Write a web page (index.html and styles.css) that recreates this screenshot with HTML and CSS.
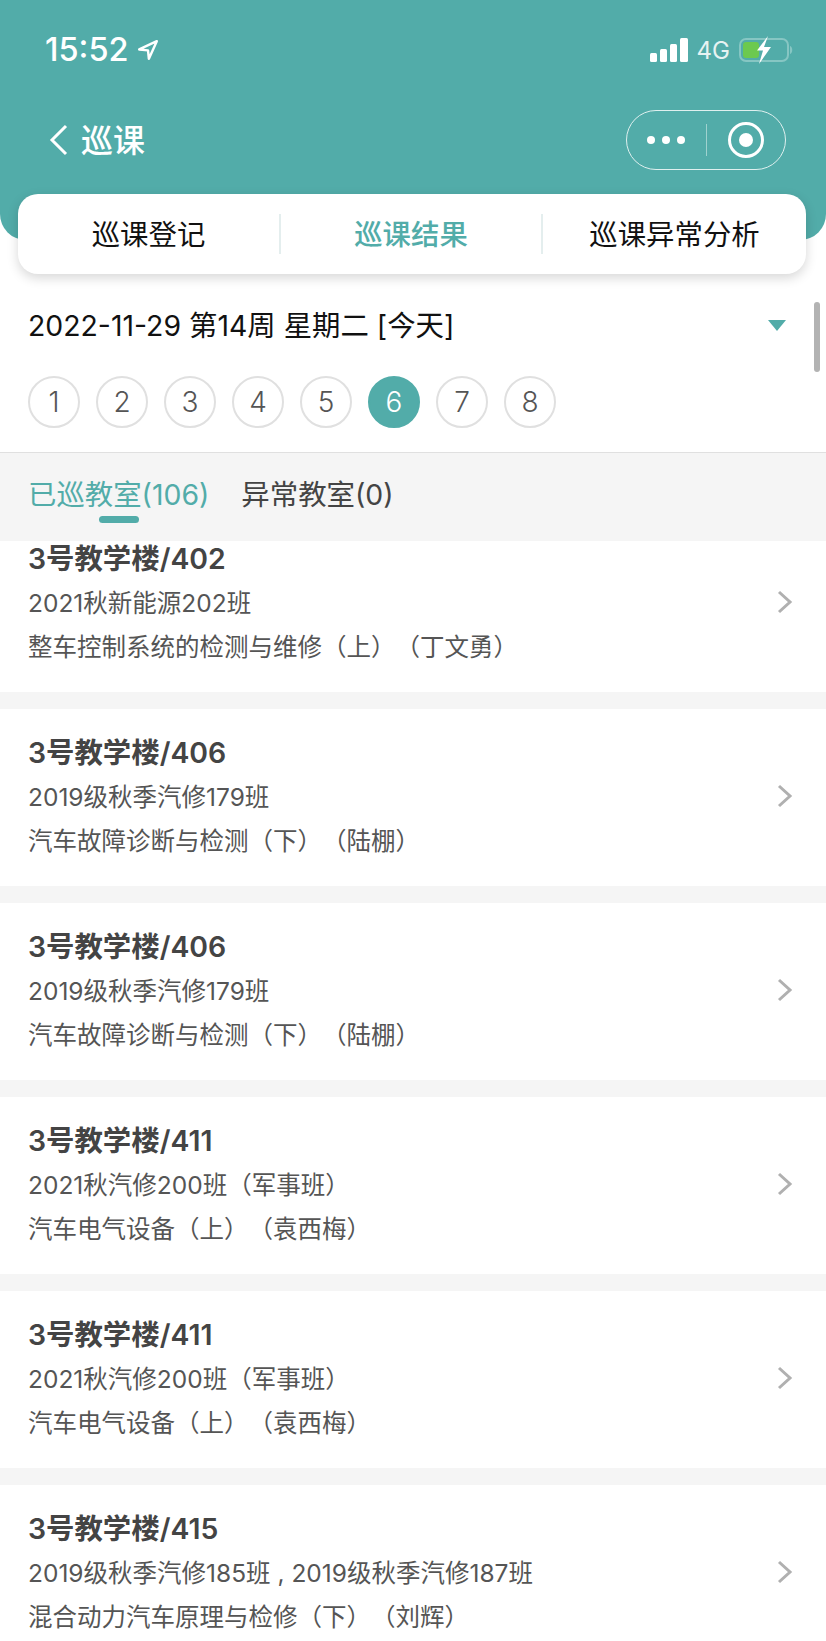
FILE: index.html
```html
<!DOCTYPE html>
<html lang="zh">
<head>
    <meta charset="UTF-8">
    <meta name="viewport" content="width=device-width, initial-scale=1.0">
    <title>巡课</title>
    <link rel="stylesheet" href="styles.css">
</head>
<body>
    <header class="top">
        <div class="status">
            <div class="clock">15:52
                <svg class="loc" width="22" height="22" viewBox="0 0 20 20"><path d="M18 2 2 9.5l8 .8.8 7.7z" fill="none" stroke="#fff" stroke-width="2.2" stroke-linejoin="round"/></svg>
            </div>
            <div class="status-right">
                <svg width="38" height="24" viewBox="0 0 38 24"><rect x="0" y="15" width="7" height="9" rx="1.5" fill="#fff"/><rect x="10" y="11" width="7" height="13" rx="1.5" fill="#fff"/><rect x="20" y="6" width="7" height="18" rx="1.5" fill="#fff"/><rect x="30" y="0" width="8" height="24" rx="1.5" fill="#fff"/></svg>
                <span class="net">4G</span>
                <svg width="54" height="28" viewBox="0 0 54 28"><rect x="1" y="3" width="48" height="22" rx="6" fill="none" stroke="#86c6c3" stroke-width="2"/><rect x="4" y="6" width="16" height="16" rx="3" fill="#6cc94f"/><path d="M51 10c3 1 3 7 0 8z" fill="#86c6c3"/><path d="M29 0 18 14.5h6L20 28l12-17h-7z" fill="#fff"/></svg>
            </div>
        </div>
        <div class="nav">
            <div class="back">
                <svg width="20" height="32" viewBox="0 0 20 32"><path d="M17 2 3 16l14 14" fill="none" stroke="#fff" stroke-width="3"/></svg>
                <span>巡课</span>
            </div>
            <div class="capsule">
                <div class="dots"><i></i><i></i><i></i></div>
                <div class="capsule-line"></div>
                <div class="target"><i></i></div>
            </div>
        </div>
    </header>

    <nav class="tabs">
        <div class="tab">巡课登记</div>
        <div class="tab tab-on">巡课结果</div>
        <div class="tab">巡课异常分析</div>
    </nav>

    <section class="date-row">
        <span class="date">2022-11-29 第14周 星期二 [今天]</span>
        <span class="caret"></span>
    </section>
    <div class="scrollbar"></div>

    <section class="periods">
        <div class="num">1</div>
        <div class="num">2</div>
        <div class="num">3</div>
        <div class="num">4</div>
        <div class="num">5</div>
        <div class="num num-on">6</div>
        <div class="num">7</div>
        <div class="num">8</div>
    </section>

    <section class="filter">
        <div class="filter-item filter-on">已巡教室(106)</div>
        <div class="filter-item">异常教室(0)</div>
    </section>

    <main class="list">
        <div class="row">
            <div class="info"><h3>3号教学楼/402</h3><p>2021秋新能源202班</p><p>整车控制系统的检测与维修（上）（丁文勇）</p></div>
            <svg class="more" width="16" height="24" viewBox="0 0 16 24"><path d="M2 2l11 10L2 22" fill="none" stroke="#b0b0b0" stroke-width="3"/></svg>
        </div>
        <div class="row">
            <div class="info"><h3>3号教学楼/406</h3><p>2019级秋季汽修179班</p><p>汽车故障诊断与检测（下）（陆棚）</p></div>
            <svg class="more" width="16" height="24" viewBox="0 0 16 24"><path d="M2 2l11 10L2 22" fill="none" stroke="#b0b0b0" stroke-width="3"/></svg>
        </div>
        <div class="row">
            <div class="info"><h3>3号教学楼/406</h3><p>2019级秋季汽修179班</p><p>汽车故障诊断与检测（下）（陆棚）</p></div>
            <svg class="more" width="16" height="24" viewBox="0 0 16 24"><path d="M2 2l11 10L2 22" fill="none" stroke="#b0b0b0" stroke-width="3"/></svg>
        </div>
        <div class="row">
            <div class="info"><h3>3号教学楼/411</h3><p>2021秋汽修200班（军事班）</p><p>汽车电气设备（上）（袁西梅）</p></div>
            <svg class="more" width="16" height="24" viewBox="0 0 16 24"><path d="M2 2l11 10L2 22" fill="none" stroke="#b0b0b0" stroke-width="3"/></svg>
        </div>
        <div class="row">
            <div class="info"><h3>3号教学楼/411</h3><p>2021秋汽修200班（军事班）</p><p>汽车电气设备（上）（袁西梅）</p></div>
            <svg class="more" width="16" height="24" viewBox="0 0 16 24"><path d="M2 2l11 10L2 22" fill="none" stroke="#b0b0b0" stroke-width="3"/></svg>
        </div>
        <div class="row">
            <div class="info"><h3>3号教学楼/415</h3><p>2019级秋季汽修185班 , 2019级秋季汽修187班</p><p>混合动力汽车原理与检修（下）（刘辉）</p></div>
            <svg class="more" width="16" height="24" viewBox="0 0 16 24"><path d="M2 2l11 10L2 22" fill="none" stroke="#b0b0b0" stroke-width="3"/></svg>
        </div>
    </main>
</body>
</html>
```

FILE: styles.css
```css
* {
    box-sizing: border-box;
}
html, body {
    margin: 0;
    height: 1641px;
    overflow: hidden;
}
body {
    position: relative;
    background: #fff;
    font-family: "Inter", "Noto Sans CJK SC", sans-serif;
    text-spacing-trim: space-all;
}
.top {
    height: 240px;
    background: #52aca9;
    border-radius: 0 0 26px 26px;
    color: #fff;
}
.status {
    height: 100px;
    padding: 32px 33px 0 45px;
    display: flex;
    justify-content: space-between;
    align-items: flex-start;
}
.clock {
    display: flex;
    align-items: center;
    gap: 8px;
    font-size: 32.5px;
    line-height: 36px;
    font-weight: 500;
}
.status-right {
    display: flex;
    align-items: center;
    gap: 9px;
    height: 36px;
}
.net {
    font-size: 24px;
    color: #e6f3f2;
}
.nav {
    display: flex;
    justify-content: space-between;
    align-items: center;
    padding: 10px 40px 0 49px;
}
.back {
    display: flex;
    align-items: center;
    gap: 12px;
    font-size: 32px;
    font-weight: 500;
}
.back span {
    margin-top: -5px;
}
.capsule {
    width: 160px;
    height: 60px;
    border: 1.5px solid #dff0ef;
    border-radius: 30px;
    display: flex;
    align-items: center;
    padding-left: 20px;
}
.dots {
    display: flex;
    gap: 7px;
    width: 59px;
}
.dots i {
    width: 8px;
    height: 8px;
    border-radius: 50%;
    background: #fff;
}
.capsule-line {
    width: 1px;
    height: 32px;
    background: #9fd2cf;
}
.target {
    width: 36px;
    height: 36px;
    margin-left: 21px;
    border: 3px solid #fff;
    border-radius: 50%;
    display: flex;
    align-items: center;
    justify-content: center;
}
.target i {
    width: 14px;
    height: 14px;
    border-radius: 50%;
    background: #fff;
}
.tabs {
    position: absolute;
    left: 18px;
    top: 194px;
    width: 788px;
    height: 80px;
    background: #fff;
    border-radius: 20px;
    box-shadow: 0 4px 12px rgba(0, 0, 0, .16);
    display: flex;
    align-items: center;
}
.tab {
    height: 40px;
    flex: 0 0 262px;
    padding-bottom: 3px;
    display: flex;
    align-items: center;
    justify-content: center;
    font-size: 28.4px;
    color: #111;
    border-left: 2px solid #e4eeee;
}
.tab:first-child {
    flex-basis: 261px;
    border-left: 0;
}
.tab:last-child {
    flex: 1;
}
.tab-on {
    color: #52aca9;
    font-weight: 500;
}
.date-row {
    height: 136px;
    padding: 66px 40px 0 28px;
    display: flex;
    justify-content: space-between;
    align-items: flex-start;
}
.date {
    font-size: 28.4px;
    line-height: 40px;
    color: #111;
}
.caret {
    margin-top: 14px;
    border-left: 9px solid transparent;
    border-right: 9px solid transparent;
    border-top: 11px solid #52aca9;
}
.scrollbar {
    position: absolute;
    right: 6px;
    top: 302px;
    width: 6px;
    height: 70px;
    border-radius: 3px;
    background: #b3b3b3;
}
.periods {
    height: 76px;
    padding: 0 28px;
    display: flex;
    gap: 16px;
    align-items: flex-start;
}
.num {
    width: 52px;
    height: 52px;
    border: 2px solid #e0e0e0;
    border-radius: 50%;
    display: flex;
    align-items: center;
    justify-content: center;
    font-size: 28px;
    font-weight: 300;
    color: #555;
}
.num-on {
    background: #52aca9;
    border-color: #52aca9;
    color: #fff;
}
.filter {
    height: 89px;
    padding: 0 28px;
    background: #f5f5f5;
    border-top: 1px solid #e0e0e0;
    display: flex;
    gap: 32px;
}
.filter-item {
    position: relative;
    font-size: 28.4px;
    line-height: 84px;
    color: #444;
}
.filter-on {
    color: #52aca9;
}
.filter-on::after {
    content: "";
    position: absolute;
    left: 71px;
    bottom: 18px;
    width: 40px;
    height: 7px;
    border-radius: 4px;
    background: #52aca9;
}
.list {
    height: 1100px;
    overflow: hidden;
    background: #f5f5f5;
}
.row {
    height: 177px;
    margin-bottom: 17px;
    padding: 24px 33px 0 28px;
    background: #fff;
    display: flex;
    justify-content: space-between;
    align-items: flex-start;
}
.row:first-child {
    margin-top: -26px;
}
.info h3 {
    margin: 0;
    font-size: 28.4px;
    line-height: 40px;
    font-weight: 600;
    color: #444;
}
.info p {
    margin: 4px 0 0;
    font-size: 24.5px;
    line-height: 40px;
    color: #555;
}
.more {
    margin-top: 51px;
}
```
